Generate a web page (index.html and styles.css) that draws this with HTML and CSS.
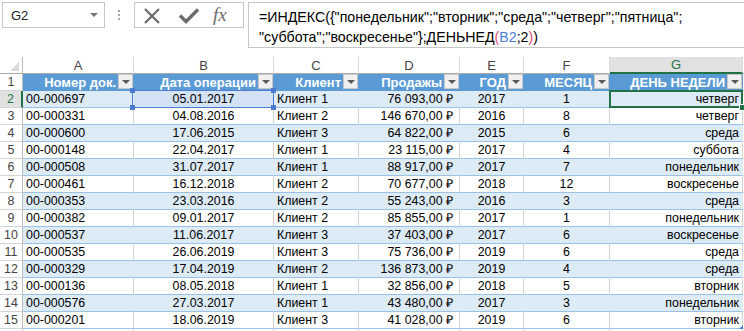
FILE: index.html
```html
<!DOCTYPE html>
<html lang="ru">
<head>
<meta charset="utf-8">
<title>Excel</title>
<link rel="stylesheet" href="styles.css">
</head>
<body>
<div class="toolbar">
  <div class="namebox"><span class="nb-text">G2</span><span class="nb-arrow"></span></div>
  <div class="dots"><i></i><i></i><i></i></div>
  <div class="fbtns">
    <svg class="ic-x" width="18" height="18" viewBox="0 0 18 18"><path d="M2 2L16 16M16 2L2 16" stroke="#6b6b6b" stroke-width="2.2" fill="none"/></svg>
    <svg class="ic-check" width="22" height="18" viewBox="0 0 22 18"><path d="M2 8.5L8 14.5L20 2.5" stroke="#6b6b6b" stroke-width="3.4" fill="none"/></svg>
    <span class="fx">fx</span>
  </div>
  <div class="formula">=ИНДЕКС({"понедельник";"вторник";"среда";"четверг";"пятница";<br>"суббота";"воскресенье"};ДЕНЬНЕД<span class="fp">(</span><span class="fr">B2</span>;2<span class="fp">)</span>)</div>
</div>

<div class="sheet">
  <div class="row colhdr">
    <div class="corner"><span class="tri"></span></div>
    <div>A</div><div>B</div><div>C</div><div>D</div><div>E</div><div>F</div><div class="cur">G</div><div class="hx"></div>
  </div>
  <div class="row thead">
    <div class="rh">1</div>
    <div class="th"><span>Номер док.</span><b class="fb"></b></div>
    <div class="th"><span>Дата операции</span><b class="fb"></b></div>
    <div class="th"><span>Клиент</span><b class="fb"></b></div>
    <div class="th"><span>Продажы</span><b class="fb"></b></div>
    <div class="th"><span>ГОД</span><b class="fb"></b></div>
    <div class="th"><span>МЕСЯЦ</span><b class="fb"></b></div>
    <div class="th"><span>ДЕНЬ НЕДЕЛИ</span><b class="fb"></b></div>
    <div class="hx"></div>
  </div>
  <div class="row band">
    <div class="rh rcur">2</div>
    <div>00-000697</div><div class="c bref">05.01.2017<span class="ref"><i class="k1"></i><i class="k2"></i><i class="k3"></i><i class="k4"></i></span></div><div>Клиент 1</div><div class="r">76 093,00 ₽</div><div class="c">2017</div><div class="c">1</div><div class="r gsel">четверг<span class="sel"><i></i></span></div><div class="hx"></div>
  </div>
  <div class="row">
    <div class="rh">3</div>
    <div>00-000331</div><div class="c">04.08.2016</div><div>Клиент 2</div><div class="r">146 670,00 ₽</div><div class="c">2016</div><div class="c">8</div><div class="r">четверг</div><div class="hx"></div>
  </div>
  <div class="row band">
    <div class="rh">4</div>
    <div>00-000600</div><div class="c">17.06.2015</div><div>Клиент 3</div><div class="r">64 822,00 ₽</div><div class="c">2015</div><div class="c">6</div><div class="r">среда</div><div class="hx"></div>
  </div>
  <div class="row">
    <div class="rh">5</div>
    <div>00-000148</div><div class="c">22.04.2017</div><div>Клиент 1</div><div class="r">23 115,00 ₽</div><div class="c">2017</div><div class="c">4</div><div class="r">суббота</div><div class="hx"></div>
  </div>
  <div class="row band">
    <div class="rh">6</div>
    <div>00-000508</div><div class="c">31.07.2017</div><div>Клиент 1</div><div class="r">88 917,00 ₽</div><div class="c">2017</div><div class="c">7</div><div class="r">понедельник</div><div class="hx"></div>
  </div>
  <div class="row">
    <div class="rh">7</div>
    <div>00-000461</div><div class="c">16.12.2018</div><div>Клиент 2</div><div class="r">70 677,00 ₽</div><div class="c">2018</div><div class="c">12</div><div class="r">воскресенье</div><div class="hx"></div>
  </div>
  <div class="row band">
    <div class="rh">8</div>
    <div>00-000353</div><div class="c">23.03.2016</div><div>Клиент 2</div><div class="r">55 243,00 ₽</div><div class="c">2016</div><div class="c">3</div><div class="r">среда</div><div class="hx"></div>
  </div>
  <div class="row">
    <div class="rh">9</div>
    <div>00-000382</div><div class="c">09.01.2017</div><div>Клиент 2</div><div class="r">85 855,00 ₽</div><div class="c">2017</div><div class="c">1</div><div class="r">понедельник</div><div class="hx"></div>
  </div>
  <div class="row band">
    <div class="rh">10</div>
    <div>00-000537</div><div class="c">11.06.2017</div><div>Клиент 3</div><div class="r">37 403,00 ₽</div><div class="c">2017</div><div class="c">6</div><div class="r">воскресенье</div><div class="hx"></div>
  </div>
  <div class="row">
    <div class="rh">11</div>
    <div>00-000535</div><div class="c">26.06.2019</div><div>Клиент 3</div><div class="r">75 736,00 ₽</div><div class="c">2019</div><div class="c">6</div><div class="r">среда</div><div class="hx"></div>
  </div>
  <div class="row band">
    <div class="rh">12</div>
    <div>00-000329</div><div class="c">17.04.2019</div><div>Клиент 2</div><div class="r">136 873,00 ₽</div><div class="c">2019</div><div class="c">4</div><div class="r">среда</div><div class="hx"></div>
  </div>
  <div class="row">
    <div class="rh">13</div>
    <div>00-000136</div><div class="c">08.05.2018</div><div>Клиент 1</div><div class="r">32 856,00 ₽</div><div class="c">2018</div><div class="c">5</div><div class="r">вторник</div><div class="hx"></div>
  </div>
  <div class="row band">
    <div class="rh">14</div>
    <div>00-000576</div><div class="c">27.03.2017</div><div>Клиент 1</div><div class="r">43 480,00 ₽</div><div class="c">2017</div><div class="c">3</div><div class="r">понедельник</div><div class="hx"></div>
  </div>
  <div class="row">
    <div class="rh">15</div>
    <div>00-000201</div><div class="c">18.06.2019</div><div>Клиент 3</div><div class="r">41 028,00 ₽</div><div class="c">2019</div><div class="c">6</div><div class="r last">вторник<span class="rsz"></span></div><div class="hx"></div>
  </div>
  <div class="row plain">
    <div class="rh"></div>
    <div></div><div></div><div></div><div></div><div></div><div></div><div></div><div class="hx"></div>
  </div>
</div>
</body>
</html>
```

FILE: styles.css
```css
html, body {
  margin: 0;
  padding: 0;
  background: #fff;
  overflow: hidden;
}
body {
  font-family: "Liberation Sans", Arial, sans-serif;
  color: #000;
  width: 744px;
  height: 331px;
}

/* ---------- formula bar ---------- */
.toolbar {
  display: flex;
  align-items: flex-start;
  height: 57px;
  padding-top: 2px;
  box-sizing: border-box;
}
.namebox {
  box-sizing: border-box;
  margin-left: 2px;
  width: 103px;
  height: 26px;
  border: 1px solid #c6c6c6;
  display: flex;
  align-items: center;
  justify-content: space-between;
  padding: 0 6px 0 8px;
}
.nb-text {
  font-size: 13px;
  color: #222;
}
.nb-arrow {
  width: 0;
  height: 0;
  border-left: 4px solid transparent;
  border-right: 4px solid transparent;
  border-top: 4px solid #777;
}
.dots {
  margin-left: 13px;
  margin-top: 8px;
  display: flex;
  flex-direction: column;
  gap: 2px;
}
.dots i {
  display: block;
  width: 2px;
  height: 2px;
  background: #a6a6a6;
}
.fbtns {
  box-sizing: border-box;
  margin-left: 14px;
  width: 110px;
  height: 26px;
  border: 1px solid #c6c6c6;
  display: flex;
  align-items: center;
  padding-left: 8px;
}
.ic-x { margin-top: 1px; }
.ic-check { margin-left: 17px; margin-top: 2px; }
.fx {
  margin-left: 13px;
  font-family: "Liberation Serif", "Times New Roman", serif;
  font-style: italic;
  font-size: 19px;
  color: #6b6b6b;
  line-height: 20px;
}
.formula {
  box-sizing: border-box;
  margin-left: 4px;
  flex: 1;
  height: 46px;
  border: 1px solid #c6c6c6;
  border-right: none;
  padding: 4px 0 0 10px;
  font-size: 14.2px;
  line-height: 20px;
  white-space: nowrap;
  overflow: hidden;
}
.fp { color: #e2507a; }
.fr { color: #4d7fd6; }

/* ---------- sheet ---------- */
.row {
  display: grid;
  grid-template-columns: 23px 111px 140px 85px 101px 64px 86px 133px 1fr;
  height: 17px;
}
.row > div {
  box-sizing: border-box;
  height: 17px;
  border-right: 1px solid #d4d4d4;
  border-bottom: 1px solid #9bc2e6;
  font-size: 12.4px;
  line-height: 17px;
  padding: 0 3px;
  white-space: nowrap;
  position: relative;
}
.row > .rh {
  border-right-color: #bdbdbd;
  border-bottom-color: #d4d4d4;
  text-align: center;
  color: #444;
  font-size: 12.4px;
  padding: 0;
}
.row > .hx { border-bottom-color: #d4d4d4; }
.row > .c { text-align: center; }
.row > .r { text-align: right; }
.row > div.r:nth-child(5) { padding-right: 6px; }

.band > div:not(.rh):not(.hx) {
  background: #ddebf7;
  border-right-color: #ddebf7;
}
.band > div:nth-child(8) { border-right-color: #d4d4d4; }

.plain > div:not(.rh) { border-bottom-color: #d4d4d4; }

/* column header */
.colhdr > div {
  border-right-color: #dadada;
  border-bottom: 1px solid #ababab;
  text-align: center;
  font-size: 13px;
  color: #444;
  line-height: 17px;
}
.colhdr > .hx { border-bottom-color: #ababab; }
.colhdr > .corner { border-right-color: #bdbdbd; }
.tri {
  position: absolute;
  right: 3px;
  bottom: 2px;
  width: 0;
  height: 0;
  border-left: 9px solid transparent;
  border-bottom: 9px solid #dadada;
}
.colhdr > .cur {
  background: #e1e1e1;
  color: #217346;
  border-bottom: 2px solid #217346;
  line-height: 16px;
}

/* table header row */
.thead > .th {
  background: #5b9bd5;
  border-right-color: #5b9bd5;
  border-bottom-color: #5b9bd5;
  color: #fff;
  font-weight: bold;
  font-size: 13px;
  display: flex;
  align-items: center;
  justify-content: flex-end;
  gap: 2px;
  padding: 0 0 0 3px;
}
.fb {
  box-sizing: border-box;
  width: 15px;
  height: 15px;
  background: #f0f0f0;
  border: 1px solid #c8c8c8;
  display: flex;
  align-items: center;
  justify-content: center;
  margin-top: -1px;
}
.fb::before {
  content: "";
  width: 0;
  height: 0;
  border-left: 4px solid transparent;
  border-right: 4px solid transparent;
  border-top: 4px solid #595959;
}

/* current cell */
.row > .rcur {
  background: #e1e1e1;
  color: #217346;
  border-right: 2px solid #217346;
}
.sel {
  position: absolute;
  left: -1px;
  top: -1px;
  right: -1px;
  bottom: -1px;
  border: 2px solid #217346;
  z-index: 3;
}
.sel i {
  position: absolute;
  right: -5px;
  bottom: -5px;
  width: 5px;
  height: 5px;
  background: #217346;
  border: 1px solid #fff;
}
.bref { background: #d3e2f4 !important; }
.ref {
  position: absolute;
  left: -2px;
  top: -1px;
  right: -1px;
  bottom: -1px;
  border: 1px solid #4a7cd2;
  z-index: 2;
}
.ref i {
  position: absolute;
  width: 5px;
  height: 5px;
  background: #4a7cd2;
}
.ref .k1 { left: -3px; top: -3px; }
.ref .k2 { right: -3px; top: -3px; }
.ref .k3 { left: -3px; bottom: -3px; }
.ref .k4 { right: -3px; bottom: -3px; }
.rsz {
  position: absolute;
  right: -1px;
  bottom: -1px;
  width: 0;
  height: 0;
  border-left: 4px solid transparent;
  border-bottom: 4px solid #4a7cd2;
}
```
